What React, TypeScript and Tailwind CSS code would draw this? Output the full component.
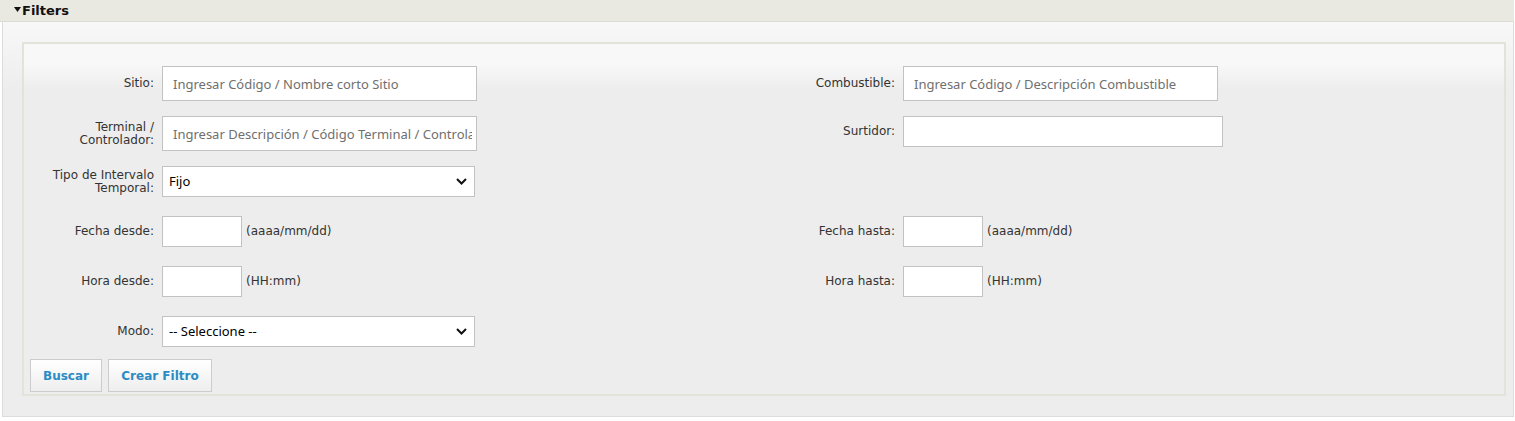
import React from 'react';

const labelFont = { fontFamily: '"DejaVu Sans", Verdana, sans-serif' };
const inputFont = { fontFamily: '"Noto Sans", "Open Sans", sans-serif' };

const Label: React.FC<{ h: string; children: React.ReactNode }> = ({ h, children }) => (
  <div
    className={`flex items-center justify-end text-right pr-2 text-[12px] leading-[13px] text-[#333] ${h}`}
    style={labelFont}
  >
    {children}
  </div>
);

const TextInput: React.FC<{ placeholder?: string; className?: string }> = ({ placeholder, className = '' }) => (
  <input
    type="text"
    placeholder={placeholder}
    className={`block bg-white border border-[#c2c2c2] pl-[10px] pr-1 text-[13px] text-[#222] placeholder:text-[#6f6f6f] outline-none ${className}`}
    style={inputFont}
  />
);

const Select: React.FC<{ value: string }> = ({ value }) => (
  <div className="relative w-[313px] h-[31px]">
    <select
      defaultValue={value}
      className="appearance-none block w-full h-full bg-white border border-[#c2c2c2] pl-[6px] text-[13px] text-black outline-none"
      style={inputFont}
    >
      <option>{value}</option>
    </select>
    <svg
      className="absolute right-[8px] top-[12px] pointer-events-none"
      width="11"
      height="7"
      viewBox="0 0 11 7"
    >
      <path d="M1 1l4.5 4.5L10 1" fill="none" stroke="#111" strokeWidth="2" />
    </svg>
  </div>
);

const Hint: React.FC<{ children: React.ReactNode }> = ({ children }) => (
  <span className="ml-1 -mt-[1px] text-[12px] text-[#333]" style={labelFont}>
    {children}
  </span>
);

const Row: React.FC<{ children: React.ReactNode; last?: boolean }> = ({ children, last }) => (
  <div className={`grid grid-cols-[138px_603px_138px_1fr] items-start ${last ? '' : 'h-[50px]'}`}>
    {children}
  </div>
);

const Button: React.FC<{ children: React.ReactNode; w: string }> = ({ children, w }) => (
  <button
    className={`h-[33px] ${w} border border-[#cccccc] bg-[linear-gradient(to_bottom,#ffffff,#eeeeee)] text-[12px] font-bold text-[#2b8cc4]`}
    style={labelFont}
  >
    {children}
  </button>
);

export default function App() {
  return (
    <div className="w-[1514px] bg-white">
      {/* Header */}
      <div className="h-[22px] bg-[#e9e8e1] border-b border-[#dcdcd4] flex items-center pl-[14px]">
        <svg width="7" height="5" viewBox="0 0 7 5" className="-mt-[3px] mr-[1px]">
          <path d="M0 0h7L3.5 5z" fill="#111" />
        </svg>
        <span className="text-[13px] font-bold text-[#111]" style={labelFont}>
          Filters
        </span>
      </div>

      {/* Panel */}
      <div className="ml-[2px] border border-t-0 border-[#dcdcdc] bg-[linear-gradient(to_bottom,#f8f8f8,#ededed_70px)] pl-[19px] pr-[7px] pt-[20px] pb-[20px]">
        <div className="border-2 border-[#e3e3db] bg-[linear-gradient(to_bottom,#f8f8f8_20px,#ededed_45px)] pt-[22px] pb-[2px]">
          <Row>
            <Label h="h-[35px]">Sitio:</Label>
            <TextInput placeholder="Ingresar Código / Nombre corto Sitio" className="w-[315px] h-[35px]" />
            <Label h="h-[35px]">Combustible:</Label>
            <TextInput placeholder="Ingresar Código / Descripción Combustible" className="w-[315px] h-[35px]" />
          </Row>
          <Row>
            <Label h="h-[35px]">
              Terminal /<br />
              Controlador:
            </Label>
            <TextInput
              placeholder="Ingresar Descripción / Código Terminal / Controlador"
              className="w-[315px] h-[35px]"
            />
            <Label h="h-[31px]">Surtidor:</Label>
            <TextInput className="w-[320px] h-[31px]" />
          </Row>
          <Row>
            <Label h="h-[31px]">
              Tipo de Intervalo
              <br />
              Temporal:
            </Label>
            <Select value="Fijo" />
            <div />
            <div />
          </Row>
          <Row>
            <Label h="h-[31px]">Fecha desde:</Label>
            <div className="flex items-center">
              <TextInput className="w-[80px] h-[31px]" />
              <Hint>(aaaa/mm/dd)</Hint>
            </div>
            <Label h="h-[31px]">Fecha hasta:</Label>
            <div className="flex items-center">
              <TextInput className="w-[80px] h-[31px]" />
              <Hint>(aaaa/mm/dd)</Hint>
            </div>
          </Row>
          <Row>
            <Label h="h-[31px]">Hora desde:</Label>
            <div className="flex items-center">
              <TextInput className="w-[80px] h-[31px]" />
              <Hint>(HH:mm)</Hint>
            </div>
            <Label h="h-[31px]">Hora hasta:</Label>
            <div className="flex items-center">
              <TextInput className="w-[80px] h-[31px]" />
              <Hint>(HH:mm)</Hint>
            </div>
          </Row>
          <Row last>
            <Label h="h-[31px]">Modo:</Label>
            <Select value="-- Seleccione --" />
            <div />
            <div />
          </Row>
          <div className="flex gap-[6px] pl-[6px] mt-[12px]">
            <Button w="w-[72px]">Buscar</Button>
            <Button w="w-[104px]">Crear Filtro</Button>
          </div>
        </div>
      </div>
    </div>
  );
}
